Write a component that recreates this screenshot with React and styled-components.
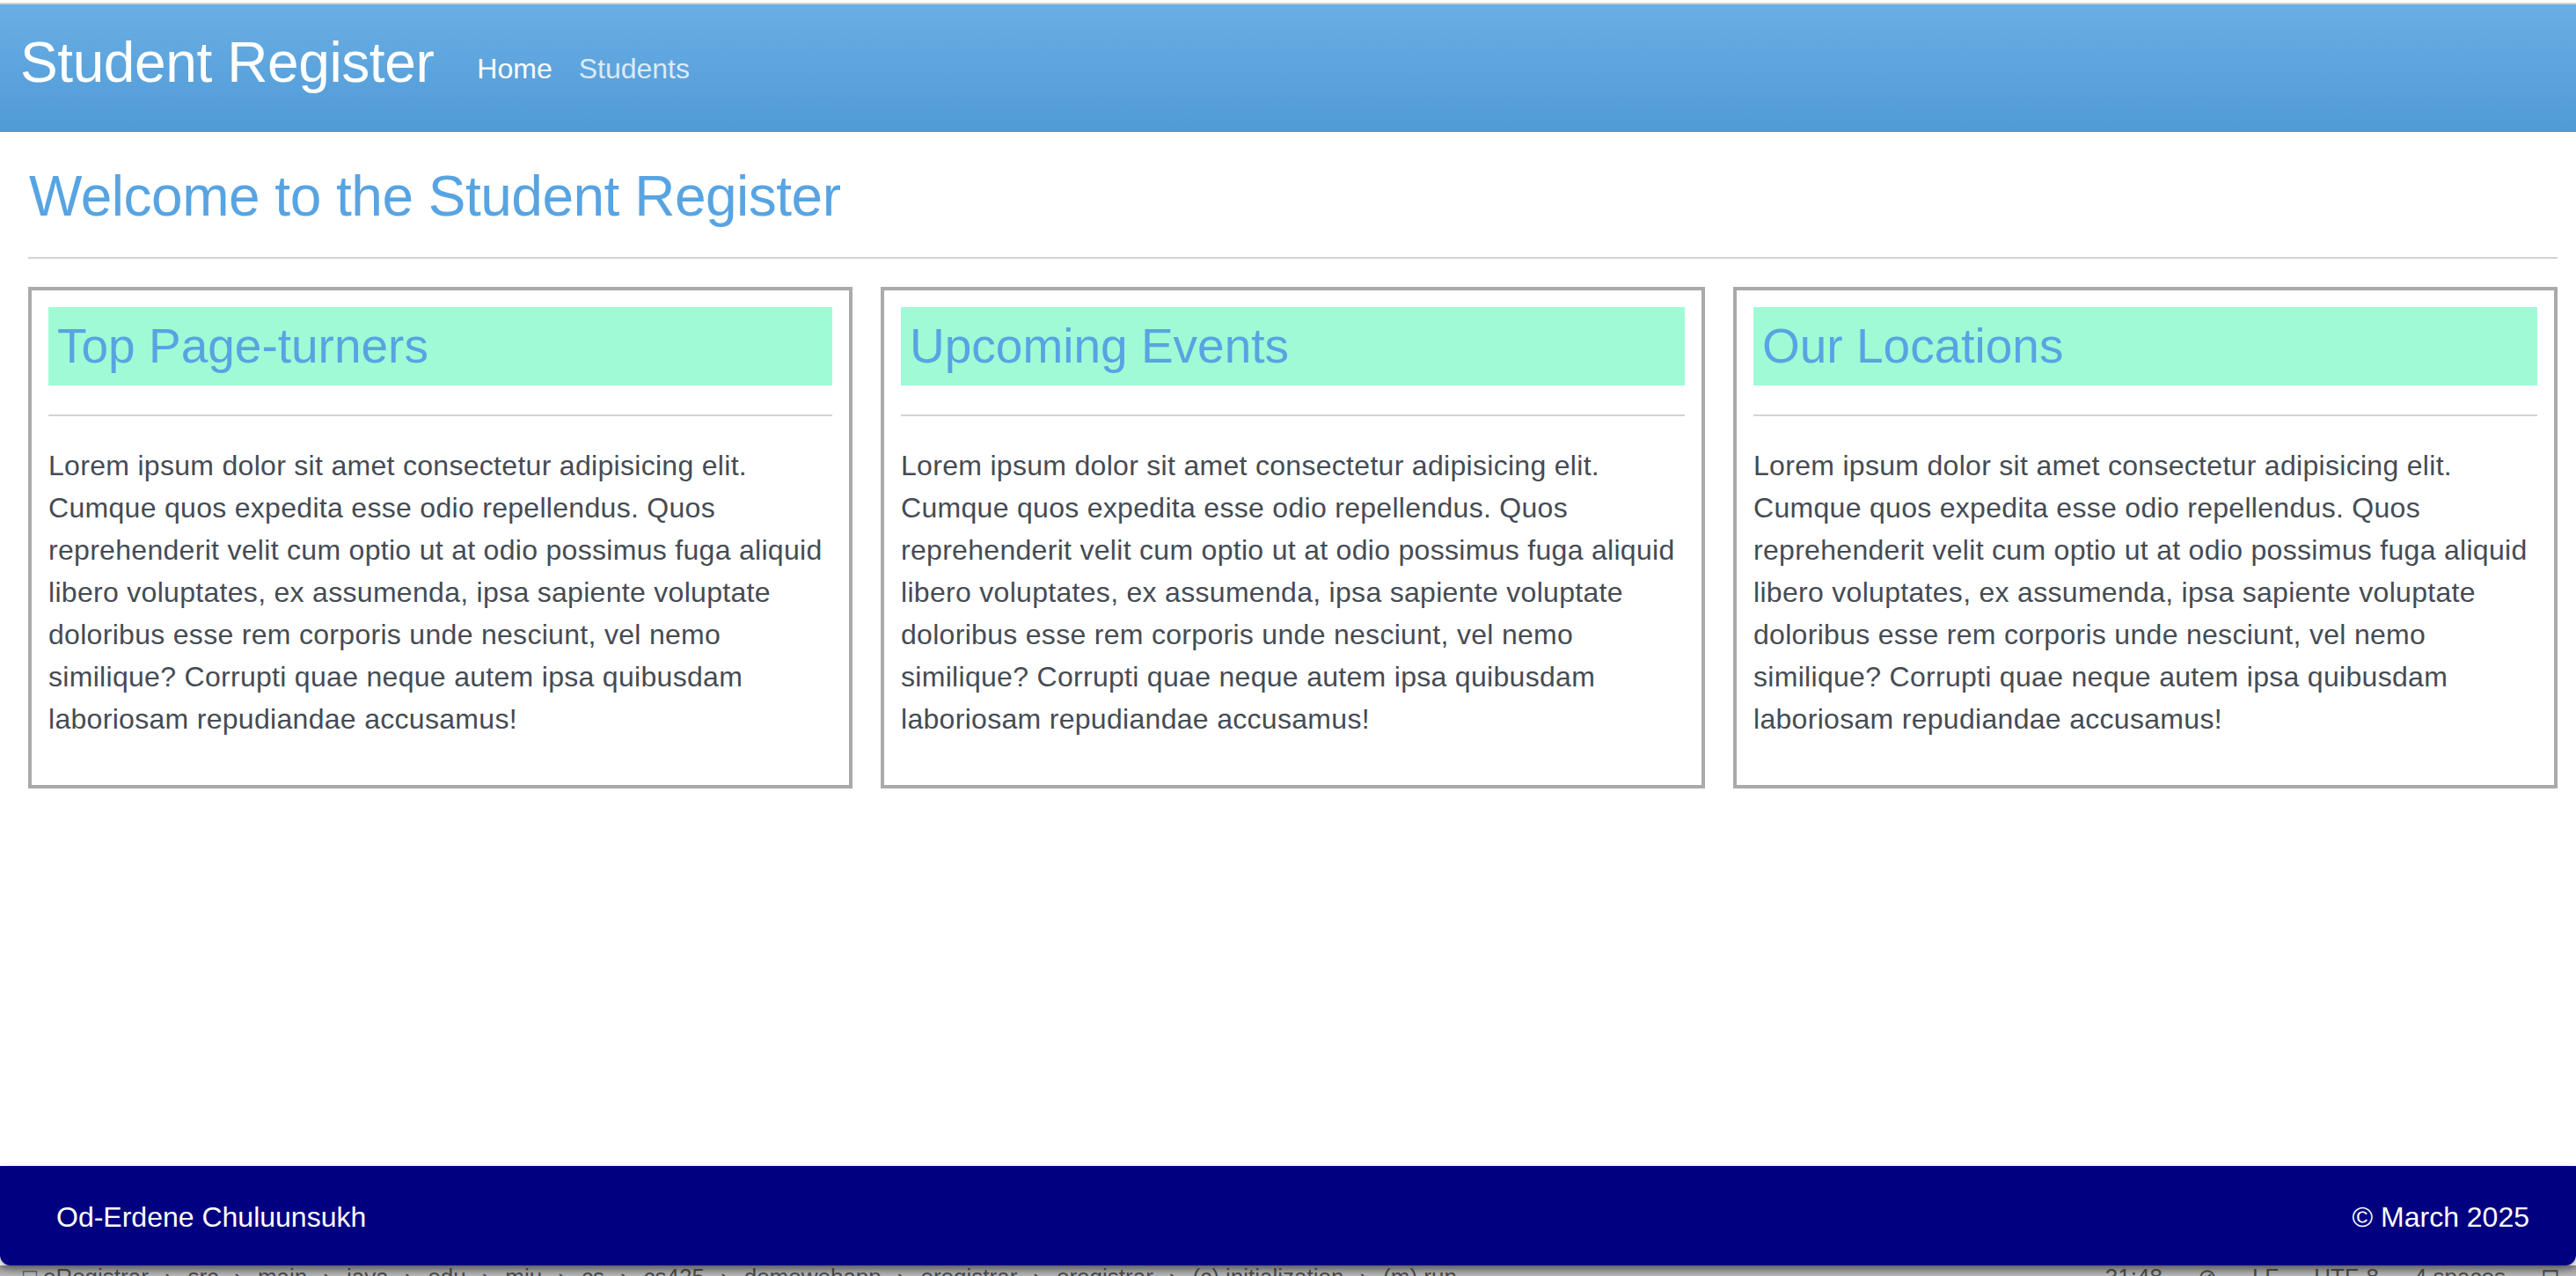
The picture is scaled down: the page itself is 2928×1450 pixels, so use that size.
import React from "react"
import styled, { createGlobalStyle } from "styled-components"

/*
 * Styles
 */

const GlobalStyle = createGlobalStyle`
  * {
    box-sizing: border-box;
  }
  html,
  body {
    margin: 0;
    padding: 0;
    background: #fff;
    overflow: hidden;
  }
  body {
    font-family: "Liberation Sans", Arial, "Noto Sans", sans-serif;
  }
`

const Page = styled.div`
  display: flex;
  flex-direction: column;
  height: 1450px;
  padding-top: 3px;
`

const Navbar = styled.header`
  display: flex;
  align-items: center;
  height: 147px;
  padding: 0 0 14px 23px;
  border-top: 2px solid #d2d2d2;
  background: linear-gradient(#6aafe5, #509ad6);
`

const Brand = styled.div`
  color: #fff;
  font-size: 64px;
  line-height: 78px;
  letter-spacing: -0.4px;
`

const NavLinks = styled.nav`
  display: flex;
  gap: 30px;
  margin: 16px 0 0 49px;
`

const NavLink = styled.a`
  color: ${(p) => (p.$active ? "#ffffff" : "rgba(255, 255, 255, 0.78)")};
  font-size: 32px;
  line-height: 39px;
  text-decoration: none;
`

const Main = styled.main`
  flex: 1;
  padding: 34px 21px 0 32px;
`

const Heading = styled.h1`
  margin: 0 0 30px 1px;
  color: #58a4e2;
  font-size: 64px;
  line-height: 78px;
  font-weight: 400;
  letter-spacing: -0.5px;
`

const Rule = styled.hr`
  height: 2px;
  margin: ${(p) => p.$margin || "0"};
  border: 0;
  background: #d3d3d3;
`

const Cards = styled.section`
  display: grid;
  grid-template-columns: repeat(3, 1fr);
  gap: 32px;
  margin-top: 32px;
`

const Card = styled.article`
  padding: 19px;
  border: 4px solid #aaaaaa;
`

const CardTitle = styled.h2`
  margin: 0;
  padding: 11px 10px;
  background: #a1fad6;
  color: #58a4e2;
  font-size: 55px;
  line-height: 67px;
  font-weight: 400;
`

const CardText = styled.p`
  margin: 32px 0;
  color: #454b53;
  font-size: 32px;
  line-height: 48px;
  letter-spacing: 0.3px;
`

const Footer = styled.footer`
  display: flex;
  justify-content: space-between;
  align-items: center;
  height: 113px;
  padding: 4px 53px 0 64px;
  border-radius: 0 0 12px 12px;
  background: #000080;
  color: #fff;
  font-size: 32px;
  line-height: 39px;
  box-shadow: 0 4px 8px rgba(0, 0, 0, 0.35);
  position: relative;
  z-index: 1;
`

const StatusBar = styled.div`
  display: flex;
  justify-content: space-between;
  height: 12px;
  padding: 0 18px 0 26px;
  overflow: hidden;
  background: linear-gradient(#8f8f8f, #b9b9b9);
  color: #4a4a4a;
  font-size: 26px;
  line-height: 26px;
`

const Crumbs = styled.div`
  display: flex;
  gap: 18px;
  white-space: nowrap;
`

const StatusItems = styled.div`
  display: flex;
  gap: 40px;
  white-space: nowrap;
`

/*
 * Component
 */

const crumbs = [
  "\u25A1 eRegistrar",
  "\u203A",
  "src",
  "\u203A",
  "main",
  "\u203A",
  "java",
  "\u203A",
  "edu",
  "\u203A",
  "miu",
  "\u203A",
  "cs",
  "\u203A",
  "cs425",
  "\u203A",
  "demowebapp",
  "\u203A",
  "eregistrar",
  "\u203A",
  "eregistrar",
  "\u203A",
  "(c) initialization",
  "\u203A",
  "(m) run",
]

const cards = ["Top Page-turners", "Upcoming Events", "Our Locations"]

const lorem =
  "Lorem ipsum dolor sit amet consectetur adipisicing elit. Cumque quos expedita esse odio repellendus. Quos reprehenderit velit cum optio ut at odio possimus fuga aliquid libero voluptates, ex assumenda, ipsa sapiente voluptate doloribus esse rem corporis unde nesciunt, vel nemo similique? Corrupti quae neque autem ipsa quibusdam laboriosam repudiandae accusamus!"

export default function App() {
  return (
    <Page>
      <GlobalStyle />
      <Navbar>
        <Brand>Student Register</Brand>
        <NavLinks>
          <NavLink href="#" $active>
            Home
          </NavLink>
          <NavLink href="#">Students</NavLink>
        </NavLinks>
      </Navbar>

      <Main>
        <Heading>Welcome to the Student Register</Heading>
        <Rule />
        <Cards>
          {cards.map((title) => (
            <Card key={title}>
              <CardTitle>{title}</CardTitle>
              <Rule $margin="33px 0 0" />
              <CardText>{lorem}</CardText>
            </Card>
          ))}
        </Cards>
      </Main>

      <Footer>
        <span>Od-Erdene Chuluunsukh</span>
        <span>© March 2025</span>
      </Footer>
      <StatusBar>
        <Crumbs>
          {crumbs.map((c, i) => (
            <span key={i}>{c}</span>
          ))}
        </Crumbs>
        <StatusItems>
          <span>31:48</span>
          <span>⊘</span>
          <span>LF</span>
          <span>UTF-8</span>
          <span>4 spaces</span>
          <span>⊡</span>
        </StatusItems>
      </StatusBar>
    </Page>
  )
}
